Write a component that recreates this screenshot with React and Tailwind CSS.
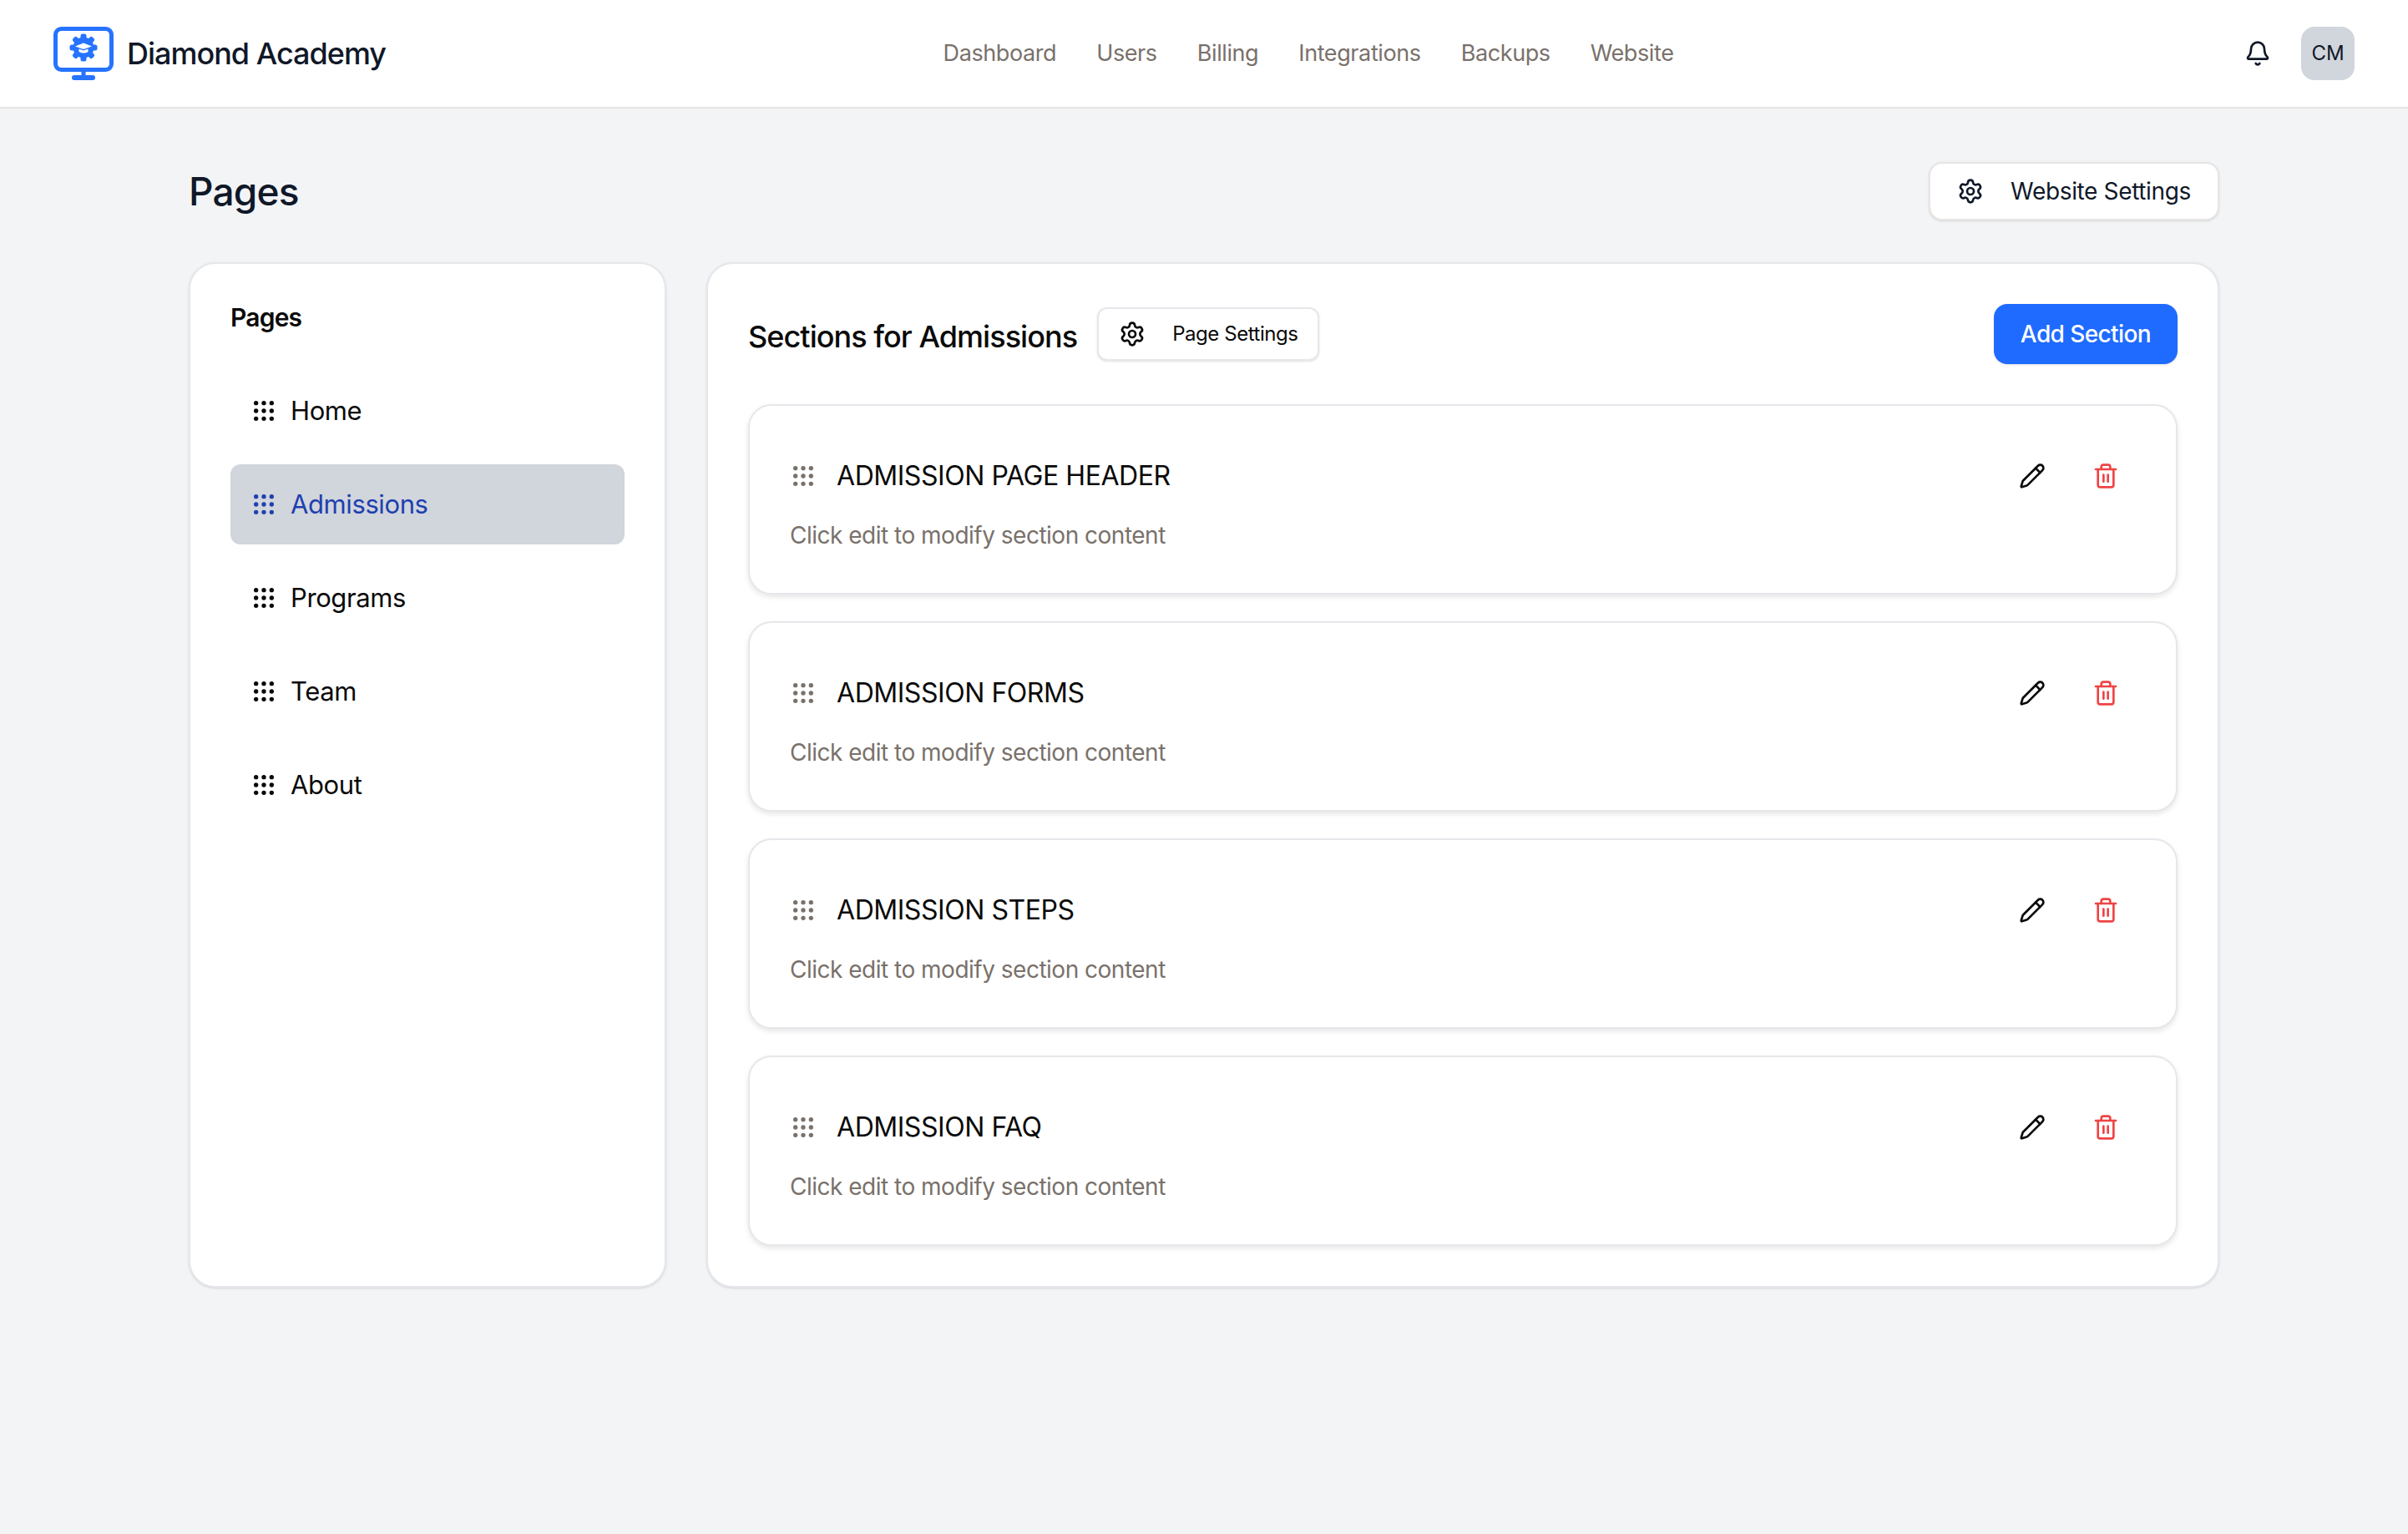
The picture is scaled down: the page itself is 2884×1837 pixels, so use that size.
import { Bell, Grip, Pencil, Settings, Trash2 } from "lucide-react";

const navLinks = ["Dashboard", "Users", "Billing", "Integrations", "Backups", "Website"];
const pages = ["Home", "Admissions", "Programs", "Team", "About"];
const sections = ["ADMISSION PAGE HEADER", "ADMISSION FORMS", "ADMISSION STEPS", "ADMISSION FAQ"];

function Logo() {
  return (
    <svg width="72" height="64" viewBox="0 0 72 64" className="shrink-0">
      <rect x="2.5" y="2.5" width="67" height="49" rx="7" fill="none" stroke="#2673ff" strokeWidth="5" />
      <rect x="33.5" y="52" width="5" height="7" fill="#2673ff" />
      <rect x="22" y="58" width="28" height="6" rx="3" fill="#2673ff" />
      <g fill="#2673ff" transform="translate(36 25)">
        <circle r="12.5" />
        {[0, 45, 90, 135, 180, 225, 270, 315].map((a) => (
          <rect key={a} x="-3.5" y="-16.5" width="7" height="8" rx="2.5" transform={`rotate(${a})`} />
        ))}
      </g>
      <path d="M36 19.5 46 23.5 36 27 26 23.5Z" fill="#fff" />
      <path d="M30.5 26.5v3.5c3.5 2 7.5 2 11 0v-3.5l-5.5 2Z" fill="#fff" />
    </svg>
  );
}

function Header() {
  return (
    <header className="flex h-[130px] items-center justify-between border-b-2 border-stone-200 bg-white px-16">
      <div className="flex items-center gap-4">
        <Logo />
        <span className="text-[36px] font-medium tracking-[-1px] text-gray-900">Diamond Academy</span>
      </div>
      <nav className="flex items-center gap-12 text-[27px] tracking-[-0.4px] text-stone-500">
        {navLinks.map((link) => (
          <a key={link}>{link}</a>
        ))}
      </nav>
      <div className="flex items-center gap-5">
        <button className="p-4 text-gray-900">
          <Bell size={32} />
        </button>
        <div className="flex h-16 w-16 items-center justify-center rounded-2xl bg-gray-300 text-[24px] text-gray-900">
          CM
        </div>
      </div>
    </header>
  );
}

function Sidebar() {
  return (
    <aside className="w-[572px] shrink-0 rounded-[32px] border-2 border-gray-200 bg-white p-12 shadow-sm">
      <h2 className="mb-11 -mt-1 text-[30px] leading-[40px] font-semibold tracking-[-0.8px] text-neutral-950">Pages</h2>
      <ul className="flex flex-col gap-4">
        {pages.map((page) => {
          const active = page === "Admissions";
          return (
            <li
              key={page}
              className={
                active
                  ? "flex h-24 items-center gap-4 rounded-xl bg-gray-300 px-6 text-[31px] tracking-[-0.4px] text-[#1e40af]"
                  : "flex h-24 items-center gap-4 rounded-xl px-6 text-[31px] tracking-[-0.4px] text-neutral-950"
              }
            >
              <Grip size={32} />
              {page}
            </li>
          );
        })}
      </ul>
    </aside>
  );
}

function SectionCard({ title }) {
  return (
    <div className="h-[228px] rounded-[28px] border-2 border-gray-200 bg-white p-12 shadow-[0_3px_6px_rgba(0,0,0,0.1)]">
      <div className="flex h-[72px] items-center justify-between">
        <div className="flex items-center gap-6">
          <Grip size={32} className="text-stone-500" />
          <h3 className="text-[32px] tracking-[-0.45px] text-neutral-950">{title}</h3>
        </div>
        <div className="flex items-center gap-4">
          <button className="p-5 text-neutral-950">
            <Pencil size={32} />
          </button>
          <button className="p-5 text-[#ef4444]">
            <Trash2 size={32} />
          </button>
        </div>
      </div>
      <p className="mt-[15px] text-[28px] leading-[40px] tracking-[-0.5px] text-stone-500">
        Click edit to modify section content
      </p>
    </div>
  );
}

export default function App() {
  return (
    <div className="min-h-screen bg-gray-100 font-['Inter',sans-serif]">
      <Header />
      <main className="mx-auto max-w-[2560px] px-16 py-[64px]">
        <div className="mb-[50px] flex items-center justify-between">
          <h1 className="text-[46px] font-medium tracking-[-0.8px] text-gray-900">Pages</h1>
          <button className="flex h-[70px] items-center gap-8 rounded-2xl border-2 border-stone-200 bg-white px-8 text-[28px] tracking-[-0.35px] text-gray-900 shadow-sm">
            <Settings size={32} />
            Website Settings
          </button>
        </div>
        <div className="flex gap-12">
          <Sidebar />
          <section className="flex-1 rounded-[32px] border-2 border-gray-200 bg-white p-12 shadow-sm">
            <div className="mb-12 flex items-center justify-between">
              <div className="flex items-center gap-6">
                <h2 className="mt-[6px] text-[36px] font-medium tracking-[-0.95px] text-neutral-950">Sections for Admissions</h2>
                <button className="flex h-[64px] items-center gap-8 rounded-xl border-2 border-gray-200 bg-white px-6 text-[24px] tracking-[-0.45px] text-neutral-950 shadow-sm">
                  <Settings size={32} />
                  Page Settings
                </button>
              </div>
              <button className="h-[72px] rounded-2xl bg-[#1f6bff] px-8 text-[28px] font-medium tracking-[-0.6px] text-white shadow-sm">
                Add Section
              </button>
            </div>
            <div className="flex flex-col gap-8">
              {sections.map((title) => (
                <SectionCard key={title} title={title} />
              ))}
            </div>
          </section>
        </div>
      </main>
    </div>
  );
}
